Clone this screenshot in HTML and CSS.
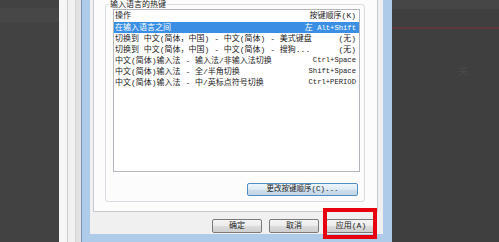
FILE: index.html
```html
<!DOCTYPE html>
<html lang="zh-CN">
<head>
<meta charset="utf-8">
<title>输入语言的热键</title>
<link rel="stylesheet" href="styles.css">
</head>
<body>
<div class="screen">
  <div class="dark-left"><div class="band"></div></div>
  <div class="back-strip"><div class="s1"></div><div class="s2"></div><div class="s3"></div></div>
  <div class="window">
    <div class="tabpage">
      <div class="group">
        <div class="legend">输入语言的热键</div>
        <div class="list">
          <div class="row head"><span class="act">操作</span><span class="cjkkey">按键顺序(K)</span></div>
          <div class="row sel"><span class="act">在输入语言之间</span><span class="key"><span class="cjkkey">左</span> Alt+Shift</span></div>
          <div class="row"><span class="act">切换到 中文(简体，中国) - 中文(简体) - 美式键盘</span><span class="cjkkey">(无)</span></div>
          <div class="row"><span class="act">切换到 中文(简体，中国) - 中文(简体) - 搜狗...</span><span class="cjkkey">(无)</span></div>
          <div class="row"><span class="act">中文(简体)输入法 - 输入法/非输入法切换</span><span class="key">Ctrl+Space</span></div>
          <div class="row"><span class="act">中文(简体)输入法 - 全/半角切换</span><span class="key">Shift+Space</span></div>
          <div class="row"><span class="act">中文(简体)输入法 - 中/英标点符号切换</span><span class="key">Ctrl+PERIOD</span></div>
        </div>
        <div class="group-actions"><button class="btn btn-focus">更改按键顺序(C)...</button></div>
      </div>
    </div>
    <div class="dialog-buttons">
      <button class="btn">确定</button>
      <button class="btn">取消</button>
      <button class="btn">应用(A)</button>
    </div>
  </div>
  <div class="dark-right">
    <div class="top-band"></div>
    <div class="red-line"></div>
    <div class="ghost">关</div>
  </div>
  <div class="highlight-box"></div>
</div>
</body>
</html>
```

FILE: styles.css
```css
* { box-sizing: border-box; margin: 0; padding: 0; }
html, body { width: 499px; height: 242px; overflow: hidden; background: #404040; }
body { font-family: "Liberation Mono", "Noto Sans CJK SC", monospace; color: #1c1c1c; }

.screen { display: flex; width: 499px; height: 242px; position: relative; }

.dark-left { width: 59px; background: #424242; display: flex; flex-direction: column; }
.dark-left .band { height: 14px; margin-top: 8px; background: #474747; }

.back-strip { width: 23px; display: flex; background: #f2f2f2; }
.s1 { width: 9px; border-right: 1px solid #cdcdcd; background: #f6f6f6; }
.s2 { width: 8px; border-right: 1px solid #d4d4d4; background: #f1f1f1; }
.s3 { flex: 1; background: #e2e2e2; }

.window {
  width: 310px;
  display: flex;
  flex-direction: column;
  background: #f0f0f0;
  border-left: 8px solid #aecbea;
  border-right: 9px solid #aecbea;
  border-bottom: 8px solid #aecbea;
  box-shadow: -1px 0 0 #7896bb, 1px 0 0 #7896bb;
}

.tabpage {
  height: 212px;
  margin: 0 5px 0 3px;
  padding: 4px 12px 9px 11px;
  background: #fcfcfc;
  border: 1px solid #c6c9cd;
  border-top: none;
}

.group {
  height: 198px;
  display: flex;
  flex-direction: column;
  border: 1px solid #d6dce1;
  border-radius: 3px;
  padding: 0 6px 5px 7px;
}

.legend {
  align-self: flex-start;
  margin: -5px 0 0 -4px;
  padding: 0 1px;
  height: 9px;
  line-height: 9px;
  font-size: 8px;
  background: #fcfcfc;
  color: #222;
}

.list {
  height: 163px;
  width: 247px;
  border: 1px solid #b4b8be;
  background: #fff;
  display: flex;
  flex-direction: column;
}

.row {
  height: 11px;
  line-height: 11px;
  font-size: 8px;
  display: flex;
  justify-content: space-between;
  align-items: center;
  padding: 0 3px 0 1px;
  white-space: nowrap;
}
.row.head { height: 12px; line-height: 12px; }
.row.sel { background: #3a8fe4; color: #fff; }

.act { overflow: hidden; }
.cjkkey { font-size: 8px; }
.key { font-size: 7.2px; }
.key .cjkkey { font-size: 8px; }

.group-actions { display: flex; justify-content: flex-end; margin-top: 11px; }

.btn {
  height: 14px;
  width: 50px;
  font-family: "Liberation Mono", "Noto Sans CJK SC", monospace;
  font-size: 8px;
  line-height: 12px;
  color: #1c1c1c;
  border: 1px solid #7a7a7a;
  border-radius: 2px;
  background: linear-gradient(#f4f4f4 0%, #ebebeb 50%, #dcdcdc 51%, #cfcfcf 100%);
}
.btn-focus {
  width: 111px;
  height: 13px;
  line-height: 11px;
  font-size: 7.5px;
  border-color: #4f8fc4;
  background: linear-gradient(#eef6fc 0%, #dde9f3 50%, #cddcea 51%, #c4d6e6 100%);
}

.dialog-buttons {
  height: 22px;
  display: flex;
  justify-content: flex-end;
  align-items: flex-start;
  gap: 7px;
  padding: 7px 7px 0 0;
}

.dark-right { flex: 1; background: #3f3f3f; display: flex; flex-direction: column; }
.dark-right .top-band { height: 9px; background: #464646; }
.dark-right .red-line { height: 2px; margin-top: 18px; background: #5e3a3a; }
.dark-right .ghost { margin: 34px 0 0 66px; font-size: 10px; color: #4a4a4a; font-family: "Noto Sans CJK SC", sans-serif; }

.highlight-box {
  position: absolute;
  left: 323px;
  top: 208px;
  width: 54px;
  height: 31px;
  border: 4px solid #e8000f;
}
```
